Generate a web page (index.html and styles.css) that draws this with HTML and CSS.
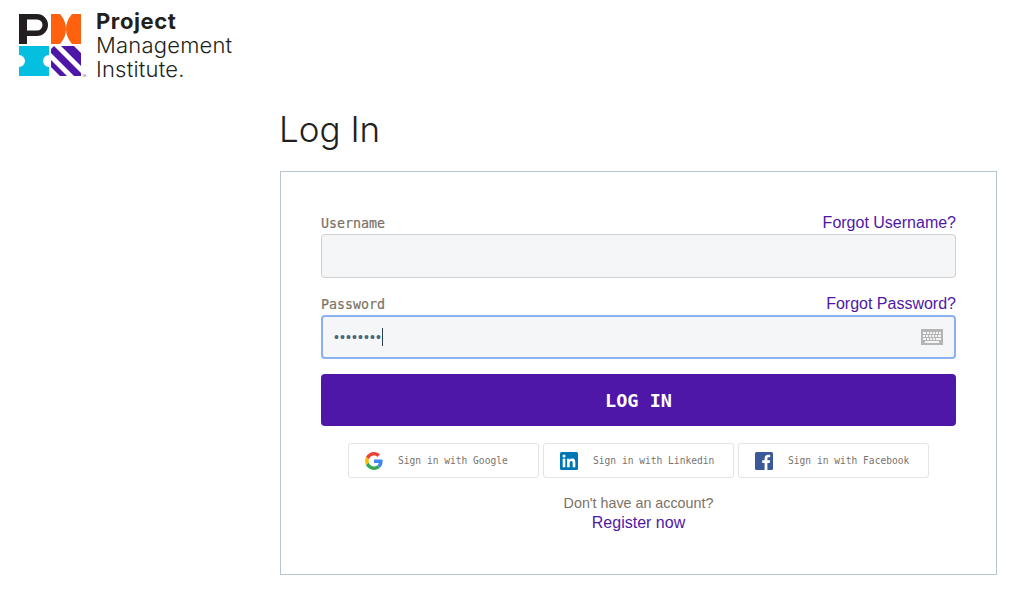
FILE: index.html
```html
<!DOCTYPE html>
<html lang="en">

<head>
    <meta charset="UTF-8">
    <meta name="viewport" content="width=device-width, initial-scale=1.0">
    <title>Log In</title>
    <link rel="stylesheet" href="styles.css">
</head>

<body>
    <header class="site-header">
        <div class="logo">
            <svg class="logo-mark" width="70" height="70" viewBox="0 0 70 70">
                <path fill="#231f20" fill-rule="evenodd" d="M1 0h18a11 11 0 0 1 0 22H9v8H1z M9 5.500v11h10a5.500 5.500 0 0 0 0-11z" />
                <path fill="#ff610f" d="M33 0h9q6 7 6 15t-6 15H33z M63 0H54q-6 7-6 15t6 15h9z" />
                <path fill="#05bfe0" d="M1 32h30v9a6 6 0 0 0 0 12v9H1v-9a6 6 0 0 0 0-12z" />
                <g class="logo-stripes">
                    <rect x="33" y="32" width="30" height="30" fill="#4f17a8" />
                    <path fill="#fff" d="M33 32h3l-3 3z M33 39l23 23h-7L33 46z M33 53l9 9h-9z M43 32l20 20v7L36 32z M56 32h7v7z" />
                </g>
                <text class="logo-tm" x="64" y="63">TM</text>
            </svg>
            <div class="logo-text">
                <span class="logo-bold">Project</span>
                <span>Management</span>
                <span>Institute.</span>
            </div>
        </div>
    </header>

    <main class="content">
        <h1 class="page-title">Log In</h1>
        <div class="login-card">
            <form class="login-form">
                <div class="form-group">
                    <div class="label-row">
                        <label for="username">Username</label>
                        <a href="#">Forgot Username?</a>
                    </div>
                    <input type="text" id="username">
                </div>
                <div class="form-group">
                    <div class="label-row">
                        <label for="password">Password</label>
                        <a href="#">Forgot Password?</a>
                    </div>
                    <div class="input-focused">
                        <span class="dots">••••••••</span><span class="caret"></span>
                        <svg class="keyboard" width="22" height="16" viewBox="0 0 22 16">
                            <rect width="22" height="16" fill="#b5b5b5" />
                            <path fill="#f4f5f7" d="M2 3h3v2H2z M6 3h2v2H6z M9 3h2v2H9z M12 3h2v2h-2z M15 3h2v2h-2z M18 3h2v2h-2z M2 6h2v2H2z M5 6h2v2H5z M8 6h2v2H8z M11 6h2v2h-2z M14 6h2v2h-2z M17 6h3v2h-3z M2 9h3v2H2z M6 9h2v2H6z M9 9h2v2H9z M12 9h2v2h-2z M15 9h5v2h-5z M4 12h14v2H4z" />
                        </svg>
                    </div>
                </div>
                <button type="button" class="login-btn">LOG IN</button>
            </form>

            <div class="social-row">
                <a href="#" class="social-btn">
                    <svg width="18" height="18" viewBox="0 0 48 48">
                        <path fill="#ea4335" d="M24 9.500c3.500 0 6.700 1.300 9.200 3.600l6.800-6.800C35.900 2.500 30.300 0 24 0 14.600 0 6.500 5.400 2.600 13.200l8 6.200C12.400 13.700 17.700 9.500 24 9.500z" />
                        <path fill="#4285f4" d="M47 24.500c0-1.600-.1-3.100-.4-4.500H24v9h12.900c-.6 3-2.200 5.500-4.700 7.200l7.700 6c4.500-4.200 7.100-10.300 7.100-17.700z" />
                        <path fill="#fbbc05" d="M10.500 28.600c-.5-1.400-.8-3-.8-4.600s.3-3.200.8-4.600l-8-6.200C.9 16.500 0 20.100 0 24s.9 7.500 2.600 10.800l7.900-6.200z" />
                        <path fill="#34a853" d="M24 48c6.500 0 11.900-2.100 15.900-5.800l-7.700-6c-2.100 1.400-4.900 2.300-8.200 2.300-6.300 0-11.600-4.200-13.500-9.900l-8 6.200C6.500 42.600 14.600 48 24 48z" />
                    </svg>
                    <span>Sign in with Google</span>
                </a>
                <a href="#" class="social-btn">
                    <svg width="18" height="18" viewBox="0 0 18 18">
                        <rect width="18" height="18" rx="1.500" fill="#0077b5" />
                        <path fill="#fff" d="M2.700 6.800h2.600v8.500H2.700z M4 2.600a1.500 1.500 0 1 1 0 3 1.500 1.500 0 0 1 0-3z M7 6.800h2.500v1.200c.4-.7 1.300-1.400 2.600-1.400 2.700 0 3.200 1.800 3.200 4.100v4.600h-2.600v-4.100c0-1 0-2.300-1.400-2.300s-1.600 1.100-1.600 2.200v4.200H7z" />
                    </svg>
                    <span>Sign in with Linkedin</span>
                </a>
                <a href="#" class="social-btn">
                    <svg width="18" height="18" viewBox="0 0 18 18">
                        <rect width="18" height="18" rx="1.500" fill="#3b5998" />
                        <path fill="#fff" d="M12.400 18v-7h2.300l.4-2.700h-2.700V6.600c0-.8.200-1.300 1.300-1.300h1.500V2.900c-.3 0-1.100-.1-2.100-.1-2.100 0-3.500 1.300-3.500 3.600v1.900H7.200V11h2.400v7z" />
                    </svg>
                    <span>Sign in with Facebook</span>
                </a>
            </div>

            <div class="register">
                <p>Don't have an account?</p>
                <a href="#">Register now</a>
            </div>
        </div>
    </main>
</body>

</html>
```

FILE: styles.css
```css
body {
    margin: 0;
    background-color: #ffffff;
    font-family: "Liberation Sans", Arial, sans-serif;
    font-size: 16px;
    color: #231f20;
}

a {
    color: #4f17a8;
    text-decoration: none;
}

.site-header {
    padding: 9px 0 0 18px;
}

.logo {
    display: flex;
    gap: 8px;
}

.logo-mark {
    margin-top: 5px;
}

.logo-tm {
    font-family: "Liberation Sans", sans-serif;
    font-size: 3px;
    fill: #777777;
}

.logo-text {
    display: flex;
    flex-direction: column;
    font-family: "Inter", sans-serif;
    font-size: 22px;
    line-height: 24px;
    letter-spacing: 0.2px;
    font-weight: 300;
    color: #231f20;
}

.logo-bold {
    font-weight: 700;
    letter-spacing: 0.6px;
}

.content {
    margin: 0 32px 0 280px;
}

.page-title {
    margin: 23px 0 20px -1px;
    font-family: "Inter", sans-serif;
    font-size: 35px;
    line-height: 44px;
    font-weight: 300;
}

.login-card {
    border: 1px solid #b8c4d0;
    padding: 40px;
    height: 322px;
}

.form-group {
    margin-bottom: 15px;
}

.label-row {
    display: flex;
    justify-content: space-between;
    align-items: baseline;
    height: 22px;
    line-height: 22px;
}

.label-row label {
    font-family: "DejaVu Sans Mono", monospace;
    font-size: 13.300px;
    color: #7a7268;
    -webkit-text-stroke: 0.2px #7a7268;
}

.form-group input,
.input-focused {
    display: flex;
    align-items: center;
    box-sizing: border-box;
    width: 100%;
    height: 44px;
    border: 1px solid #cfcfcf;
    border-radius: 4px;
    background-color: #f5f6f8;
}

.input-focused {
    border: 2px solid #8ab0ef;
    padding-left: 11px;
}

.dots {
    font-size: 14px;
    letter-spacing: 1.100px;
    color: #4a6478;
}

.caret {
    width: 1px;
    height: 18px;
    background-color: #2d4050;
}

.keyboard {
    margin-left: auto;
    margin-right: 11px;
}

.login-btn {
    display: block;
    width: 100%;
    height: 52px;
    border: none;
    border-radius: 4px;
    background-color: #4f17a8;
    color: #ffffff;
    font-family: "DejaVu Sans Mono", monospace;
    font-size: 18.500px;
    font-weight: 700;
}

.social-row {
    display: flex;
    justify-content: center;
    gap: 4px;
    margin-top: 17px;
}

.social-btn {
    display: flex;
    align-items: center;
    box-sizing: border-box;
    width: 191px;
    height: 35px;
    padding-left: 16px;
    gap: 15px;
    border: 1px solid #e4e4e4;
    border-radius: 3px;
    font-family: "DejaVu Sans Mono", monospace;
    font-size: 9.600px;
    color: #77736e;
}

.register {
    margin-top: 15px;
    text-align: center;
    line-height: 20px;
}

.register p {
    margin: 0;
    font-size: 14.300px;
    color: #7a7268;
}
```
